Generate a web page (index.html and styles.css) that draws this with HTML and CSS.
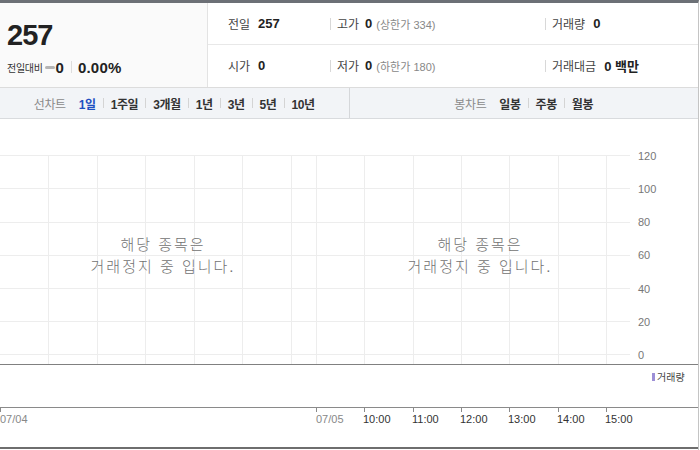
FILE: index.html
```html
<!DOCTYPE html>
<html lang="ko">
<head>
  <meta charset="UTF-8" />
  <title>차트</title>
  <link rel="stylesheet" href="styles.css">
</head>
<body>
  <div class="stock">
    <div class="summary">
      <div class="now">
        <strong class="price">257</strong>
        <div class="change">
          <span class="lbl">전일대비</span>
          <span class="flat"></span>
          <b class="diff">0</b>
          <span class="bar"></span>
          <b class="rate">0.00%</b>
        </div>
      </div>
      <div class="info">
        <div class="row">
          <div class="cell first"><span class="k">전일</span><b>257</b></div>
          <div class="cell sep"><span class="k">고가</span><b>0</b><em>(상한가 334)</em></div>
          <div class="cell sep"><span class="k">거래량</span><b>0</b></div>
        </div>
        <div class="row">
          <div class="cell first"><span class="k">시가</span><b>0</b></div>
          <div class="cell sep"><span class="k">저가</span><b>0</b><em>(하한가 180)</em></div>
          <div class="cell sep"><span class="k">거래대금</span><b>0 백만</b></div>
        </div>
      </div>
    </div>

    <div class="tabs">
      <div class="tab-group">
        <span class="title">선차트</span>
        <a class="on">1일</a><i></i>
        <a>1주일</a><i></i>
        <a>3개월</a><i></i>
        <a>1년</a><i></i>
        <a>3년</a><i></i>
        <a>5년</a><i></i>
        <a>10년</a>
      </div>
      <div class="tab-group">
        <span class="title">봉차트</span>
        <a>일봉</a><i></i>
        <a>주봉</a><i></i>
        <a>월봉</a>
      </div>
    </div>

    <div class="chart">
      <svg width="698" height="331" viewBox="0 0 698 331">
        <g stroke="#ededed" stroke-width="1">
          <line x1="0" y1="36.5" x2="630" y2="36.5"/>
          <line x1="0" y1="69.5" x2="630" y2="69.5"/>
          <line x1="0" y1="103.5" x2="630" y2="103.5"/>
          <line x1="0" y1="136.5" x2="630" y2="136.5"/>
          <line x1="0" y1="169.5" x2="630" y2="169.5"/>
          <line x1="0" y1="202.5" x2="630" y2="202.5"/>
          <line x1="0" y1="235.5" x2="630" y2="235.5"/>
          <line x1="48.5" y1="36" x2="48.5" y2="245"/>
          <line x1="97.5" y1="36" x2="97.5" y2="245"/>
          <line x1="145.5" y1="36" x2="145.5" y2="245"/>
          <line x1="194.5" y1="36" x2="194.5" y2="245"/>
          <line x1="242.5" y1="36" x2="242.5" y2="245"/>
          <line x1="291.5" y1="36" x2="291.5" y2="245"/>
          <line x1="316.5" y1="36" x2="316.5" y2="245"/>
          <line x1="364.5" y1="36" x2="364.5" y2="245"/>
          <line x1="413.5" y1="36" x2="413.5" y2="245"/>
          <line x1="461.5" y1="36" x2="461.5" y2="245"/>
          <line x1="509.5" y1="36" x2="509.5" y2="245"/>
          <line x1="558.5" y1="36" x2="558.5" y2="245"/>
          <line x1="606.5" y1="36" x2="606.5" y2="245"/>
        </g>
        <g class="ylabels">
          <text x="638" y="41">120</text>
          <text x="638" y="74">100</text>
          <text x="638" y="107">80</text>
          <text x="638" y="140">60</text>
          <text x="638" y="174">40</text>
          <text x="638" y="207">20</text>
          <text x="638" y="240">0</text>
        </g>
        <line x1="0" y1="245.5" x2="698" y2="245.5" stroke="#808080"/>
        <rect x="652" y="254" width="3" height="8" fill="#9d8fd6"/>
        <text class="legend" x="657" y="262">거래량</text>
        <line x1="0" y1="288.5" x2="698" y2="288.5" stroke="#8a8a8a"/>
        <g stroke="#8a8a8a">
          <line x1="0.5" y1="288" x2="0.5" y2="293"/>
          <line x1="316.5" y1="288" x2="316.5" y2="293"/>
          <line x1="364.5" y1="288" x2="364.5" y2="293"/>
          <line x1="413.5" y1="288" x2="413.5" y2="293"/>
          <line x1="461.5" y1="288" x2="461.5" y2="293"/>
          <line x1="509.5" y1="288" x2="509.5" y2="293"/>
          <line x1="558.5" y1="288" x2="558.5" y2="293"/>
          <line x1="606.5" y1="288" x2="606.5" y2="293"/>
        </g>
        <g class="xlabels">
          <text class="day" x="0" y="304">07/04</text>
          <text class="day" x="316" y="304">07/05</text>
          <text x="363" y="304">10:00</text>
          <text x="412" y="304">11:00</text>
          <text x="460" y="304">12:00</text>
          <text x="508" y="304">13:00</text>
          <text x="557" y="304">14:00</text>
          <text x="605" y="304">15:00</text>
        </g>
        <line x1="0" y1="329" x2="698" y2="329" stroke="#6e6e6e" stroke-width="2"/>
      </svg>
      <p class="halt left">해당 종목은<br>거래정지 중 입니다.</p>
      <p class="halt right">해당 종목은<br>거래정지 중 입니다.</p>
    </div>
  </div>
</body>
</html>
```

FILE: styles.css
```css
* { box-sizing: border-box; }
body {
  margin: 0;
  background: #fff;
  font-family: "Liberation Sans", "Noto Sans CJK KR", sans-serif;
  color: #333;
}
.stock {
  width: 699px;
  border-top: 3px solid #6c7076;
  border-right: 1px solid #c4c4c4;
}

/* summary */
.summary {
  display: flex;
  height: 85px;
  border-bottom: 1px solid #dcdcdc;
}
.now {
  width: 208px;
  background: #fafafa;
  border-right: 1px solid #e3e3e3;
  padding: 16px 0 0 7px;
}
.price {
  display: block;
  font-size: 29px;
  line-height: 32px;
  letter-spacing: -1px;
  color: #222;
}
.change {
  display: flex;
  align-items: center;
  margin-top: 7px;
  height: 18px;
}
.change .lbl {
  font-size: 10px;
  letter-spacing: -0.3px;
  color: #333;
}
.change .flat {
  width: 10px;
  height: 3px;
  border-radius: 2px;
  background: #b5b5b5;
  margin: 1px 1px 0 2px;
}
.change .diff { font-size: 15px; color: #222; }
.change .bar {
  width: 1px;
  height: 12px;
  background: #ddd;
  margin: 0 6px 0 7px;
}
.change .rate { font-size: 15px; color: #222; letter-spacing: 0.2px; }

.info { flex: 1; }
.row {
  display: grid;
  grid-template-columns: 122px 215px 1fr;
  height: 42px;
  align-items: center;
}
.row + .row { border-top: 1px solid #e8e8e8; height: 42px; }
.row:first-child { height: 41px; }
.cell {
  display: flex;
  align-items: center;
  font-size: 12px;
  white-space: nowrap;
}
.cell.first { padding-left: 20px; }
.cell.sep::before {
  content: "";
  width: 1px;
  height: 12px;
  background: #d8d8d8;
  margin-right: 6px;
}
.cell .k { color: #444; margin-right: 8px; }
.cell.sep .k { margin-right: 6px; }
.cell:last-child .k { margin-right: 8px; }
.cell b { font-size: 13px; color: #222; }
.cell em {
  font-style: normal;
  font-size: 11px;
  color: #888;
  margin-left: 4px;
}

/* tabs */
.tabs {
  display: flex;
  height: 31px;
  background: #f2f4f7;
  border-bottom: 1px solid #d9dbde;
}
.tab-group {
  flex: 1;
  display: flex;
  justify-content: center;
  align-items: center;
  font-size: 12px;
  letter-spacing: -0.4px;
}
.tab-group + .tab-group { border-left: 1px solid #d5d7da; }
.tab-group .title { color: #8a8a8a; margin-right: 13px; }
.tab-group a { font-weight: bold; color: #333; }
.tab-group a.on { color: #1d4fc1; }
.tab-group i {
  width: 1px;
  height: 10px;
  background: #d4d4d4;
  margin: 0 7px;
}

/* chart */
.chart {
  position: relative;
  height: 331px;
}
.chart svg { display: block; }
.ylabels text {
  font-size: 11px;
  fill: #777;
  font-family: "Liberation Sans", sans-serif;
}
.legend {
  font-size: 10px;
  fill: #444;
  font-family: "Noto Sans CJK KR", sans-serif;
}
.xlabels text {
  font-size: 11px;
  fill: #333;
  font-family: "Liberation Sans", sans-serif;
}
.xlabels .day { fill: #888; }
.halt {
  position: absolute;
  top: 115px;
  margin: 0;
  width: 220px;
  text-align: center;
  font-size: 15px;
  line-height: 22px;
  letter-spacing: 2px;
  color: #727272;
  font-weight: 300;
}
.halt.left { left: 53px; }
.halt.right { left: 370px; }
```
